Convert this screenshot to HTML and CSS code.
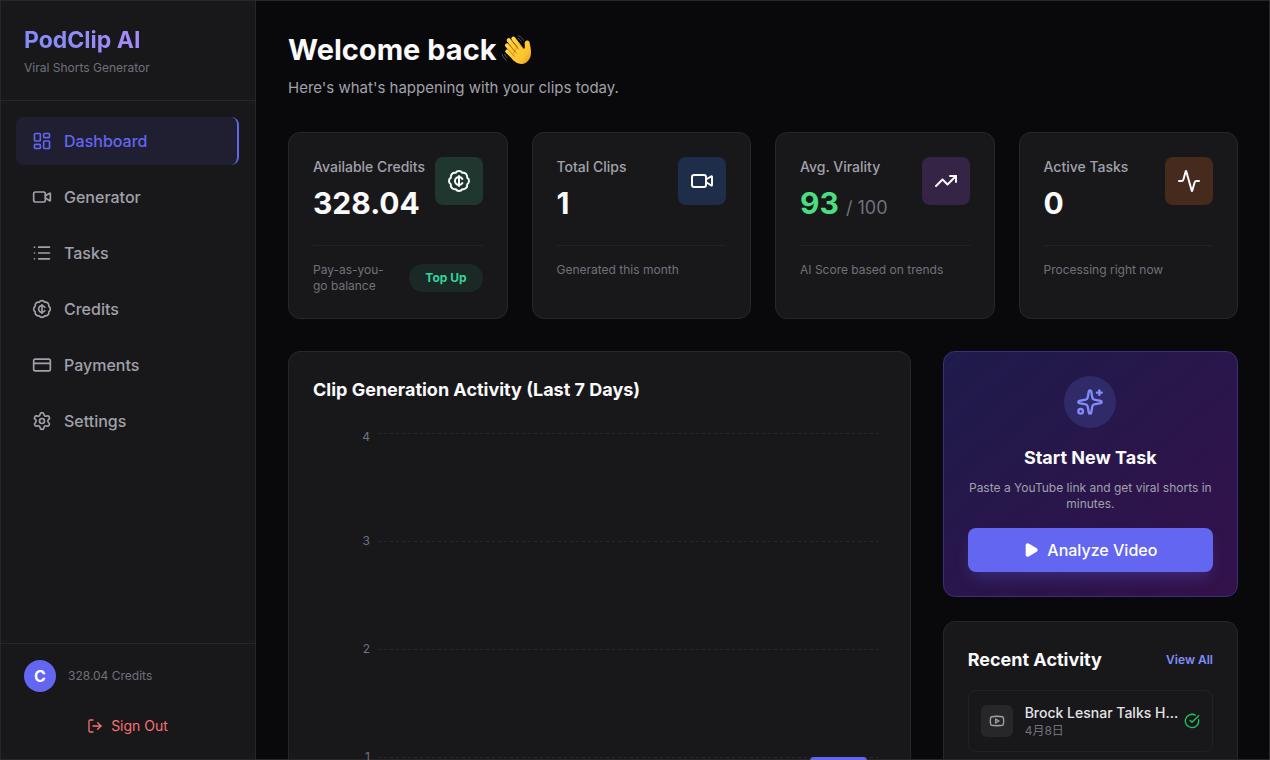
FILE: index.html
```html
<!DOCTYPE html>
<html lang="en">

<head>
    <meta charset="UTF-8">
    <meta name="viewport" content="width=device-width, initial-scale=1.0">
    <title>PodClip AI</title>
    <link rel="stylesheet" href="styles.css">
</head>

<body>
    <!-- icons used more than once -->
    <svg class="sprite" aria-hidden="true">
        <symbol id="i-video" viewBox="0 0 24 24">
            <path d="m16 13 5.223 3.482a.5.5 0 0 0 .777-.416V7.87a.5.5 0 0 0-.752-.432L16 10.5" />
            <rect x="2" y="6" width="14" height="12" rx="2" />
        </symbol>
        <symbol id="i-cent" viewBox="0 0 24 24">
            <path d="M3.85 8.62a4 4 0 0 1 4.78-4.77 4 4 0 0 1 6.74 0 4 4 0 0 1 4.78 4.78 4 4 0 0 1 0 6.74 4 4 0 0 1-4.77 4.78 4 4 0 0 1-6.75 0 4 4 0 0 1-4.78-4.77 4 4 0 0 1 0-6.76Z" />
            <path d="M12 7v10" />
            <path d="M15.4 10a4 4 0 1 0 0 4" />
        </symbol>
    </svg>

    <div class="app">
        <aside class="sidebar">
            <div class="brand">
                <div class="brand-name">PodClip AI</div>
                <p class="brand-sub">Viral Shorts Generator</p>
            </div>
            <nav class="nav">
                <a class="nav-item active" href="#">
                    <svg class="icon" viewBox="0 0 24 24">
                        <rect width="7" height="9" x="3" y="3" rx="1" />
                        <rect width="7" height="5" x="14" y="3" rx="1" />
                        <rect width="7" height="9" x="14" y="12" rx="1" />
                        <rect width="7" height="5" x="3" y="16" rx="1" />
                    </svg>
                    Dashboard
                </a>
                <a class="nav-item" href="#"><svg class="icon"><use href="#i-video" /></svg>Generator</a>
                <a class="nav-item" href="#">
                    <svg class="icon" viewBox="0 0 24 24">
                        <path d="M3 5h.01M3 12h.01M3 19h.01M8 5h13M8 12h13M8 19h13" />
                    </svg>
                    Tasks
                </a>
                <a class="nav-item" href="#"><svg class="icon"><use href="#i-cent" /></svg>Credits</a>
                <a class="nav-item" href="#">
                    <svg class="icon" viewBox="0 0 24 24">
                        <rect width="20" height="14" x="2" y="5" rx="2" />
                        <path d="M2 10h20" />
                    </svg>
                    Payments
                </a>
                <a class="nav-item" href="#">
                    <svg class="icon" viewBox="0 0 24 24">
                        <path d="M9.671 4.136a2.34 2.34 0 0 1 4.659 0 2.34 2.34 0 0 0 3.319 1.915 2.34 2.34 0 0 1 2.33 4.033 2.34 2.34 0 0 0 0 3.831 2.34 2.34 0 0 1-2.33 4.033 2.34 2.34 0 0 0-3.319 1.915 2.34 2.34 0 0 1-4.659 0 2.34 2.34 0 0 0-3.32-1.915 2.34 2.34 0 0 1-2.33-4.033 2.34 2.34 0 0 0 0-3.831A2.34 2.34 0 0 1 6.35 6.051a2.34 2.34 0 0 0 3.319-1.915" />
                        <circle cx="12" cy="12" r="3" />
                    </svg>
                    Settings
                </a>
            </nav>
            <div class="account">
                <div class="user">
                    <span class="avatar">C</span>
                    <span class="user-credits">328.04 Credits</span>
                </div>
                <button class="sign-out" type="button">
                    <svg class="icon small" viewBox="0 0 24 24">
                        <path d="m16 17 5-5-5-5" />
                        <path d="M21 12H9" />
                        <path d="M9 21H5a2 2 0 0 1-2-2V5a2 2 0 0 1 2-2h4" />
                    </svg>
                    Sign Out
                </button>
            </div>
        </aside>

        <main class="main">
            <header class="page-head">
                <h1>Welcome back
                    <svg class="wave" viewBox="0 0 32 32" role="img" aria-label="waving hand">
                        <defs>
                            <linearGradient id="skin" x1="0" y1="0" x2="1" y2="1">
                                <stop offset="0" stop-color="#ffd84a" />
                                <stop offset="0.65" stop-color="#fcc32e" />
                                <stop offset="1" stop-color="#e88f18" />
                            </linearGradient>
                        </defs>
                        <g stroke="url(#skin)" stroke-width="4" stroke-linecap="round" fill="none">
                            <path d="M12.300 4.500 20.500 15" />
                            <path d="M7.800 6.200 17 18" />
                            <path d="M6 11.300 14.500 21.500" />
                            <path d="M6.300 17.300 14 25" />
                        </g>
                        <path fill="url(#skin)" d="M18 11.500l4 3c1.200.7 1.800 0 1.800-1.200L23.700 9c0-3 4.300-3.600 4.900-.5.400 2.600 1.500 6 1.400 10.500-.1 6-4 10.500-9.200 11-4 .3-7-2-10-5.500z" />
                        <path d="M10.300 6.300l7.300 9M7.700 10l7.600 9.200M7 15.500l6.500 7" fill="none" stroke="#c9801a" stroke-width="0.900" stroke-linecap="round" />
                        <path d="M17.500 1.800c2.200.8 4 2.400 5 4.500M17.200 4.300c1.200.6 2.200 1.500 2.900 2.700M1.200 20.500c.6 2.400 2 4.400 4 5.700M3.700 20.500c.5 1.300 1.300 2.400 2.400 3.200" fill="none" stroke="#55555a" stroke-width="1" stroke-linecap="round" />
                    </svg>
                </h1>
                <p>Here's what's happening with your clips today.</p>
            </header>

            <section class="stats">
                <article class="card stat">
                    <div class="stat-top">
                        <div>
                            <p class="stat-label">Available Credits</p>
                            <p class="stat-value">328.04</p>
                        </div>
                        <span class="stat-icon green"><svg class="icon"><use href="#i-cent" /></svg></span>
                    </div>
                    <div class="stat-foot">
                        <span>Pay-as-you-go balance</span>
                        <button class="top-up" type="button">Top Up</button>
                    </div>
                </article>
                <article class="card stat">
                    <div class="stat-top">
                        <div>
                            <p class="stat-label">Total Clips</p>
                            <p class="stat-value">1</p>
                        </div>
                        <span class="stat-icon blue"><svg class="icon"><use href="#i-video" /></svg></span>
                    </div>
                    <div class="stat-foot"><span>Generated this month</span></div>
                </article>
                <article class="card stat">
                    <div class="stat-top">
                        <div>
                            <p class="stat-label">Avg. Virality</p>
                            <p class="stat-value score">93 <span>/ 100</span></p>
                        </div>
                        <span class="stat-icon purple">
                            <svg class="icon" viewBox="0 0 24 24">
                                <path d="M16 7h6v6" />
                                <path d="m22 7-8.500 8.500-5-5L2 17" />
                            </svg>
                        </span>
                    </div>
                    <div class="stat-foot"><span>AI Score based on trends</span></div>
                </article>
                <article class="card stat">
                    <div class="stat-top">
                        <div>
                            <p class="stat-label">Active Tasks</p>
                            <p class="stat-value">0</p>
                        </div>
                        <span class="stat-icon orange">
                            <svg class="icon" viewBox="0 0 24 24">
                                <path d="M22 12h-2.480a2 2 0 0 0-1.930 1.460l-2.350 8.360a.25.25 0 0 1-.48 0L9.240 2.180a.25.25 0 0 0-.48 0l-2.350 8.360A2 2 0 0 1 4.490 12H2" />
                            </svg>
                        </span>
                    </div>
                    <div class="stat-foot"><span>Processing right now</span></div>
                </article>
            </section>

            <section class="columns">
                <article class="card activity">
                    <h2>Clip Generation Activity (Last 7 Days)</h2>
                    <div class="chart">
                        <div class="chart-row"><span>4</span><i></i></div>
                        <div class="chart-row"><span>3</span><i></i></div>
                        <div class="chart-row"><span>2</span><i></i></div>
                        <div class="chart-row"><span>1</span><i></i></div>
                        <div class="bars">
                            <div class="bar" style="height: 0%"></div>
                            <div class="bar" style="height: 0%"></div>
                            <div class="bar" style="height: 0%"></div>
                            <div class="bar" style="height: 0%"></div>
                            <div class="bar" style="height: 0%"></div>
                            <div class="bar" style="height: 0%"></div>
                            <div class="bar" style="height: 25%"></div>
                        </div>
                    </div>
                </article>

                <div class="side">
                    <article class="card start">
                        <span class="start-icon">
                            <svg class="icon" viewBox="0 0 24 24">
                                <path d="M11.017 2.814a1 1 0 0 1 1.966 0l1.051 5.558a2 2 0 0 0 1.594 1.594l5.558 1.051a1 1 0 0 1 0 1.966l-5.558 1.051a2 2 0 0 0-1.594 1.594l-1.051 5.558a1 1 0 0 1-1.966 0l-1.051-5.558a2 2 0 0 0-1.594-1.594l-5.558-1.051a1 1 0 0 1 0-1.966l5.558-1.051a2 2 0 0 0 1.594-1.594z" />
                                <path d="M20 2v4" />
                                <path d="M22 4h-4" />
                                <circle cx="4" cy="20" r="2" />
                            </svg>
                        </span>
                        <h2>Start New Task</h2>
                        <p>Paste a YouTube link and get viral shorts in minutes.</p>
                        <button class="analyze" type="button">
                            <svg class="icon small filled" viewBox="0 0 24 24">
                                <path d="M5 5a2 2 0 0 1 3.008-1.728l11.997 6.998a2 2 0 0 1 .003 3.458l-12 7A2 2 0 0 1 5 19z" />
                            </svg>
                            Analyze Video
                        </button>
                    </article>

                    <article class="card recent">
                        <div class="recent-head">
                            <h2>Recent Activity</h2>
                            <a href="#">View All</a>
                        </div>
                        <a class="clip" href="#">
                            <span class="clip-icon">
                                <svg class="icon small" viewBox="0 0 24 24">
                                    <path d="M2.500 17a24.120 24.120 0 0 1 0-10 2 2 0 0 1 1.400-1.400 49.560 49.560 0 0 1 16.200 0A2 2 0 0 1 21.500 7a24.120 24.120 0 0 1 0 10 2 2 0 0 1-1.400 1.400 49.550 49.550 0 0 1-16.200 0A2 2 0 0 1 2.500 17" />
                                    <path d="m10 15 5-3-5-3z" />
                                </svg>
                            </span>
                            <span class="clip-text">
                                <span class="clip-title">Brock Lesnar Talks H...</span>
                                <span class="clip-date">4月8日</span>
                            </span>
                            <svg class="icon small done" viewBox="0 0 24 24">
                                <path d="M21.801 10A10 10 0 1 1 17 3.335" />
                                <path d="m9 11 3 3L22 4" />
                            </svg>
                        </a>
                    </article>
                </div>
            </section>
        </main>
    </div>
</body>

</html>
```
FILE: styles.css
```css
* {
    padding: 0;
    margin: 0;
    box-sizing: border-box;
}

body {
    background-color: #09090b;
    color: #fafafa;
    font-family: Inter, "Noto Sans CJK SC", sans-serif;
    font-size: 16px;
    line-height: 24px;
}

a {
    color: inherit;
    text-decoration: none;
}

button {
    border: 0;
    font: inherit;
    cursor: pointer;
}

h2 {
    font-size: 18px;
    line-height: 28px;
    font-weight: 700;
}

.sprite {
    position: absolute;
    width: 0;
    height: 0;
}

.icon {
    flex: none;
    width: 20px;
    height: 20px;
    fill: none;
    stroke: currentColor;
    stroke-width: 2;
    stroke-linecap: round;
    stroke-linejoin: round;
}

.icon.small {
    width: 16px;
    height: 16px;
}

.icon.filled {
    fill: currentColor;
}

.app {
    display: flex;
    height: 100vh;
    outline: 1px solid #27272a;
    outline-offset: -1px;
}

/* sidebar */
.sidebar {
    flex: none;
    width: 256px;
    display: flex;
    flex-direction: column;
    background-color: #18181b;
    border-right: 1px solid #27272a;
}

.brand {
    padding: 24px;
    border-bottom: 1px solid #27272a;
}

.brand-name {
    width: fit-content;
    font-size: 23px;
    line-height: 32px;
    font-weight: 700;
    color: transparent;
    background: linear-gradient(to right, #818cf8, #a78bfa);
    background-clip: text;
    -webkit-background-clip: text;
}

.brand-sub {
    margin-top: 4px;
    font-size: 12px;
    line-height: 16px;
    color: #71717a;
}

.nav {
    flex: 1;
    display: flex;
    flex-direction: column;
    gap: 8px;
    padding: 16px;
}

.nav-item {
    display: flex;
    align-items: center;
    gap: 12px;
    padding: 12px 16px;
    border-radius: 8px;
    font-weight: 500;
    color: #a1a1aa;
}

.nav-item.active {
    background-color: rgba(99, 102, 241, 0.1);
    border-right: 2px solid #6366f1;
    color: #6366f1;
}

.account {
    padding: 16px;
    border-top: 1px solid #27272a;
}

.user {
    display: flex;
    align-items: center;
    gap: 12px;
    padding: 0 8px;
}

.avatar {
    width: 32px;
    height: 32px;
    border-radius: 50%;
    background-color: #6366f1;
    text-align: center;
    line-height: 32px;
    font-weight: 700;
}

.user-credits {
    font-size: 12px;
    color: #71717a;
}

.sign-out {
    width: 100%;
    display: flex;
    align-items: center;
    justify-content: center;
    gap: 8px;
    margin-top: 16px;
    padding: 8px;
    background: none;
    font-size: 14px;
    line-height: 20px;
    color: #f87171;
}

/* main */
.main {
    flex: 1;
    min-width: 0;
    padding: 32px;
    overflow-y: auto;
    scrollbar-width: none;
}

.page-head {
    margin-bottom: 32px;
}

.page-head h1 {
    display: flex;
    align-items: center;
    gap: 4px;
    font-size: 29px;
    line-height: 36px;
    font-weight: 700;
}

.wave {
    width: 32px;
    height: 32px;
}

.page-head p {
    margin-top: 8px;
    font-size: 15px;
    color: #a1a1aa;
}

.card {
    padding: 24px;
    background-color: #18181b;
    border: 1px solid #27272a;
    border-radius: 12px;
}

.stats {
    display: grid;
    grid-template-columns: repeat(4, minmax(0, 1fr));
    gap: 24px;
    margin-bottom: 32px;
}

.stat-top {
    display: flex;
    justify-content: space-between;
    white-space: nowrap;
}

.stat-label {
    font-size: 14px;
    line-height: 20px;
    font-weight: 500;
    color: #a1a1aa;
}

.stat-value {
    margin-top: 8px;
    font-size: 30px;
    line-height: 36px;
    font-weight: 700;
}

.stat-value.score {
    color: #4ade80;
}

.stat-value.score span {
    font-size: 18px;
    line-height: 24px;
    font-weight: 400;
    color: #71717a;
}

.stat-icon {
    flex: none;
    width: 48px;
    height: 48px;
    display: flex;
    align-items: center;
    justify-content: center;
    border-radius: 8px;
}

.stat-icon .icon {
    width: 24px;
    height: 24px;
}

.stat-icon.green {
    background-color: #1f372f;
}

.stat-icon.blue {
    background-color: #1e2d49;
}

.stat-icon.purple {
    background-color: #352446;
}

.stat-icon.orange {
    background-color: #472a1e;
}

.stat-foot {
    display: flex;
    align-items: center;
    justify-content: space-between;
    gap: 16px;
    margin-top: 24px;
    padding-top: 16px;
    border-top: 1px solid #222225;
    font-size: 12px;
    line-height: 16px;
    color: #71717a;
}

.top-up {
    flex: none;
    padding: 6px 16px;
    border-radius: 14px;
    background-color: #1a2926;
    font-weight: 700;
    color: #34d399;
}

.columns {
    display: grid;
    grid-template-columns: repeat(3, minmax(0, 1fr));
    gap: 32px;
}

.activity {
    grid-column: span 2;
}

/* bar chart, one row per grid line */
.chart {
    position: relative;
    margin-top: 24px;
    padding: 5px 8px 40px 0;
}

.chart-row {
    display: flex;
    gap: 8px;
    height: 108px;
}

.chart-row span {
    width: 57px;
    margin-top: -8px;
    line-height: 16px;
    font-size: 12px;
    text-align: right;
    color: #71717a;
}

/* top tick stays inside the chart */
.chart-row:first-child span {
    margin-top: -4px;
}

.chart-row i {
    flex: 1;
    height: 1px;
    background: repeating-linear-gradient(to right, #29292c 0 3px, transparent 3px 6px);
}

.bars {
    position: absolute;
    inset: 5px 12px 40px 65px;
    display: flex;
    align-items: flex-end;
}

.bar {
    flex: 1;
    margin: 0 7px;
    border-radius: 4px 4px 0 0;
    background-color: #6366f1;
}

/* right column */
.side {
    display: flex;
    flex-direction: column;
    gap: 24px;
}

.start {
    display: flex;
    flex-direction: column;
    align-items: center;
    text-align: center;
    background: linear-gradient(to bottom right, #1e1b4b, #34114a);
    border-color: #37307a;
}

.start-icon {
    padding: 12px;
    border-radius: 50%;
    background-color: #312a69;
    color: #818cf8;
}

.start-icon .icon {
    display: block;
    width: 28px;
    height: 28px;
}

.start h2 {
    margin-top: 16px;
}

.start p {
    margin-top: 8px;
    font-size: 12px;
    line-height: 16px;
    color: #a1a1aa;
}

.analyze {
    width: 100%;
    display: flex;
    align-items: center;
    justify-content: center;
    gap: 8px;
    margin-top: 16px;
    padding: 10px;
    border-radius: 8px;
    background-color: #6366f1;
    box-shadow: 0 8px 16px -4px rgba(99, 102, 241, 0.3);
    font-weight: 500;
    color: #fff;
}

.recent-head {
    display: flex;
    align-items: center;
    justify-content: space-between;
    margin-bottom: 16px;
}

.recent-head a {
    font-size: 12px;
    font-weight: 600;
    color: #818cf8;
}

.clip {
    display: flex;
    align-items: center;
    gap: 4px;
    padding: 12px;
    border: 1px solid #222225;
    border-radius: 8px;
}

.clip-icon {
    margin-right: 8px;
    padding: 8px;
    border-radius: 6px;
    background-color: #27272a;
    color: #a1a1aa;
}

.clip-icon .icon {
    display: block;
}

.clip-text {
    flex: 1;
    min-width: 0;
    display: flex;
    flex-direction: column;
}

.clip-title {
    overflow: hidden;
    white-space: nowrap;
    text-overflow: ellipsis;
    font-size: 14px;
    line-height: 20px;
    font-weight: 500;
    color: #e4e4e7;
}

.clip-date {
    font-size: 12px;
    line-height: 16px;
    color: #71717a;
}

.done {
    color: #22c55e;
}
```
